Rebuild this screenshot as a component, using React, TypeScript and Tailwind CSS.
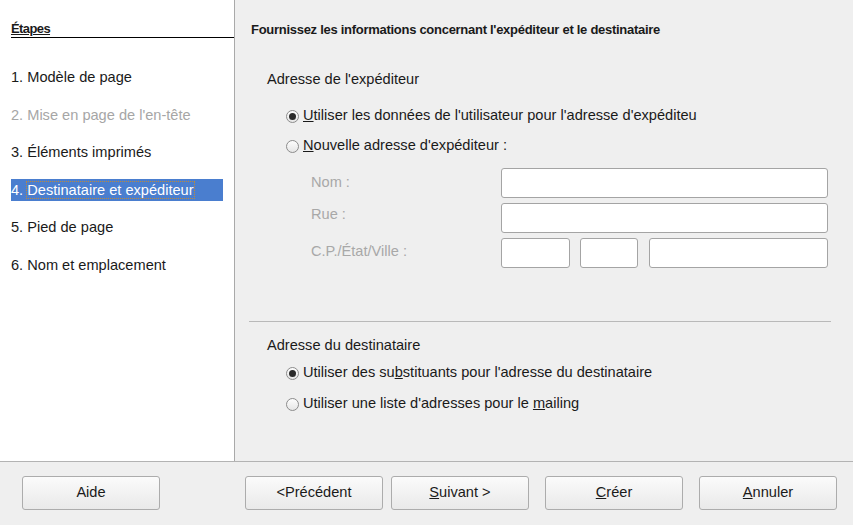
import React from 'react';

const steps = [
  { label: '1. Modèle de page' },
  { label: "2. Mise en page de l'en-tête", disabled: true },
  { label: '3. Éléments imprimés' },
  { label: '4. Destinataire et expéditeur', active: true },
  { label: '5. Pied de page' },
  { label: '6. Nom et emplacement' },
];

const Radio: React.FC<{ checked?: boolean; children: React.ReactNode }> = ({ checked, children }) => (
  <div className="flex items-center h-[20px]">
    <span className="w-[13px] h-[13px] rounded-full border border-[#8c8c8c] bg-gradient-to-b from-[#fdfdfd] to-[#e6e6e6] flex items-center justify-center">
      {checked && <span className="w-[7px] h-[7px] rounded-full bg-[#2a2a2a]" />}
    </span>
    <span className="ml-[4px]">{children}</span>
  </div>
);

const Field: React.FC<{ className?: string }> = ({ className }) => (
  <div className={`h-[30px] bg-white border border-[#a4a4a4] rounded-[3px] ${className ?? ''}`} />
);

const Button: React.FC<{ className?: string; children: React.ReactNode }> = ({ className, children }) => (
  <button className={`w-[138px] h-[34px] rounded-[3px] border border-[#acacac] bg-gradient-to-b from-[#fbfbfb] to-[#e9e9e9] text-[14.6px] text-[#1a1a1a] ${className ?? ''}`}>
    {children}
  </button>
);

export default function App() {
  return (
    <div className="w-[853px] h-[525px] flex flex-col bg-[#efefef] text-[14.6px] text-[#1a1a1a] font-['Liberation_Sans',Arial,sans-serif] overflow-hidden">
      <div className="flex h-[461px]">
        {/* Steps sidebar */}
        <aside className="w-[235px] shrink-0 bg-white border-r border-[#a9a9a9] pl-[11px] pt-[21px]">
          <div className="border-b border-black h-[17px] text-[13px] font-bold leading-[16px] tracking-[-0.6px] font-['Liberation_Sans_Narrow','Liberation_Sans',sans-serif]">
            <span className="underline">Étapes</span>
          </div>
          <ul className="mt-[28px] flex flex-col gap-[15.6px]">
            {steps.map((s) => (
              <li
                key={s.label}
                className={`h-[22px] leading-[22px] w-[212px] ${
                  s.active ? 'bg-[#4a7ecf] text-white' : s.disabled ? 'text-[#a6a6a6]' : ''
                }`}
              >
                {s.active ? (
                  <span className="inline-block"><span>4. </span><span className="outline-1 outline-dotted outline-[#c08a3a] leading-[20px]">Destinataire et expéditeur</span></span>
                ) : (
                  s.label
                )}
              </li>
            ))}
          </ul>
        </aside>

        {/* Main content */}
        <main className="flex-1 pl-[14px] pr-[25px] pt-[21px]">
          <h1 className="pl-[2px] text-[13px] font-bold leading-[18px] font-['Liberation_Sans_Narrow','Liberation_Sans',sans-serif] tracking-[-0.28px]">
            Fournissez les informations concernant l'expéditeur et le destinataire
          </h1>

          <div className="pl-[18px] mt-[30px] leading-[20px]">Adresse de l'expéditeur</div>
          <div className="pl-[37px] mt-[17px] flex flex-col gap-[10px]">
            <Radio checked>
              <span className="underline">U</span>tiliser les données de l'utilisateur pour l'adresse d'expéditeu
            </Radio>
            <Radio>
              <span className="underline">N</span>ouvelle adresse d'expéditeur :
            </Radio>
          </div>

          <div className="mt-[12px] pl-[62px] text-[#a8a8a8] flex flex-col gap-[5px]">
            <div className="flex items-center">
              <span className="w-[190px]">Nom :</span>
              <Field className="flex-1" />
            </div>
            <div className="flex items-center">
              <span className="w-[190px] relative -top-[3px]">Rue :</span>
              <Field className="flex-1" />
            </div>
            <div className="flex items-center">
              <span className="w-[190px] relative -top-[1px]">C.P./État/Ville :</span>
              <Field className="w-[69px]" />
              <Field className="w-[58px] ml-[10px]" />
              <Field className="flex-1 ml-[11px]" />
            </div>
          </div>

          <div className="mt-[53px] border-t border-[#b9b9b9] -mr-[3px]" />

          <div className="pl-[18px] mt-[13px] leading-[20px]">Adresse du destinataire</div>
          <div className="pl-[37px] mt-[8px] flex flex-col gap-[11px]">
            <Radio checked>
              Utiliser des su<span className="underline">b</span>stituants pour l'adresse du destinataire
            </Radio>
            <Radio>
              Utiliser une liste d'adresses pour le <span className="underline">m</span>ailing
            </Radio>
          </div>
        </main>
      </div>

      {/* Button bar */}
      <footer className="flex-1 border-t border-[#b3b3b3] flex items-start pt-[14px] pl-[22px]">
        <Button>Aide</Button>
        <Button className="ml-[85px]">&lt;Précédent</Button>
        <Button className="ml-[8px]">
          <span className="underline">S</span>uivant &gt;
        </Button>
        <Button className="ml-[16px]">
          <span className="underline">C</span>réer
        </Button>
        <Button className="ml-[16px]">
          <span className="underline">A</span>nnuler
        </Button>
      </footer>
    </div>
  );
}
